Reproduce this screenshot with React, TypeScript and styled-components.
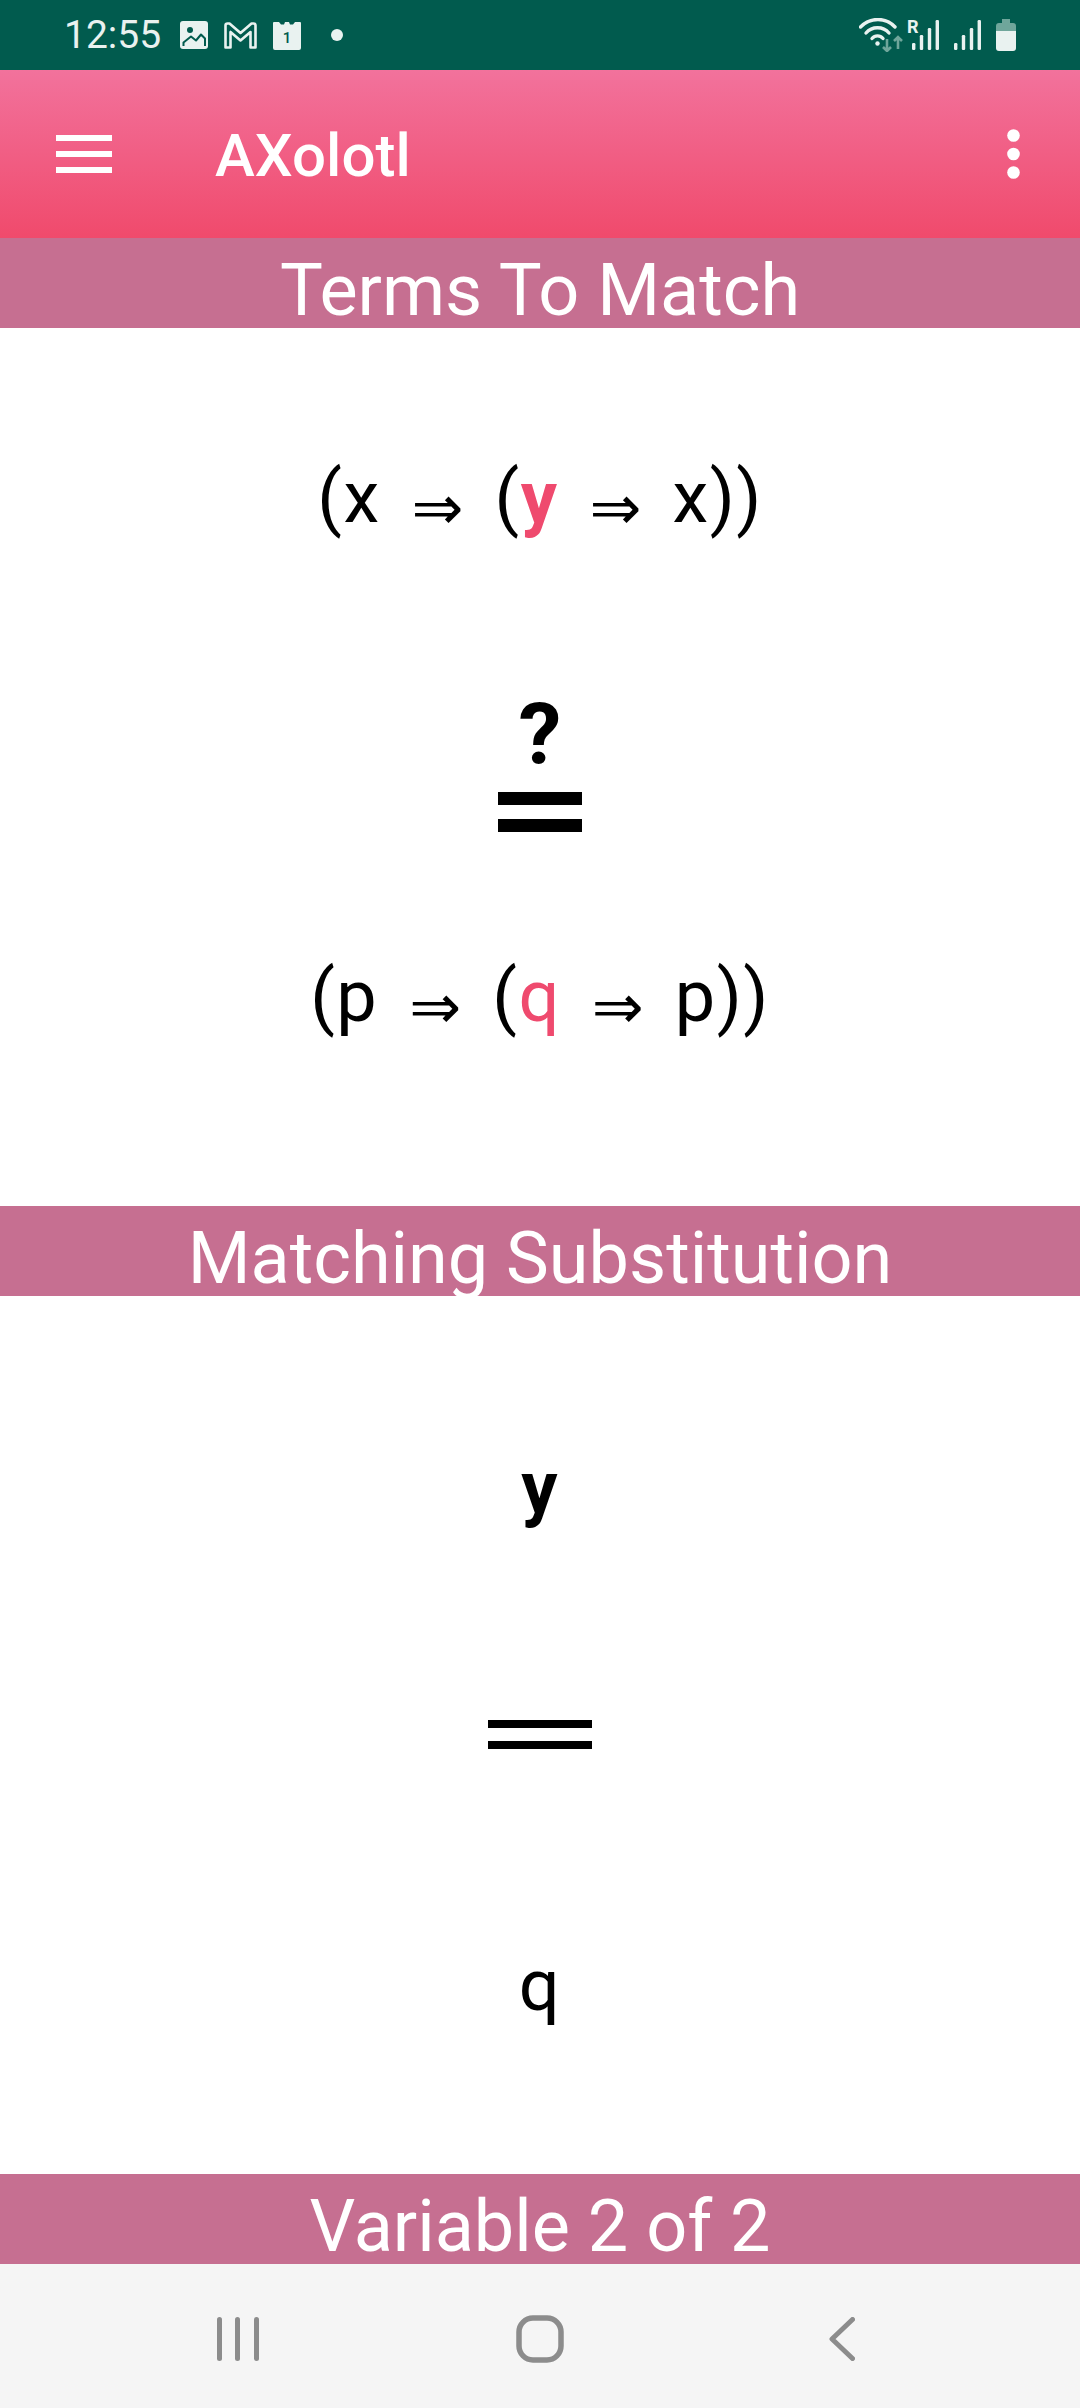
import React from "react";
import styled, { createGlobalStyle } from "styled-components";

const Global = createGlobalStyle`
  html, body { margin: 0; padding: 0; background: #fff; }
  body { font-family: Roboto, "Liberation Sans", sans-serif; }
`;

const Page = styled.div`
  width: 1080px;
  height: 2408px;
  display: flex;
  flex-direction: column;
  overflow: hidden;
  background: #fff;
`;

const StatusBar = styled.div`
  height: 70px;
  flex: none;
  display: flex;
  align-items: center;
  background: #015b4e;
  color: #e9f2f0;
  padding: 0 0 0 64px;
  box-sizing: border-box;
`;

const Clock = styled.span`
  font-size: 39px;
  font-weight: 400;
  line-height: 70px;
  width: 116px;
`;

const StatusIcons = styled.div`
  display: flex;
  align-items: center;
  gap: 16px;
`;

const StatusRight = styled.div`
  margin-left: auto;
  margin-right: 64px;
  display: flex;
  align-items: center;
`;

const Toolbar = styled.header`
  height: 168px;
  flex: none;
  box-sizing: border-box;
  display: flex;
  align-items: center;
  padding: 0 60px 0 56px;
  background: linear-gradient(180deg, #f2729c 0%, #f04a6c 100%);
  color: #fff;
`;

const Title = styled.h1`
  margin: 4px 0 0 103px;
  font-size: 60px;
  font-weight: 500;
  line-height: 164px;
  flex: 1;
`;

const Banner = styled.div`
  height: 90px;
  flex: none;
  background: #c66f91;
  color: #fff;
  font-size: 72px;
  font-weight: 400;
  line-height: 105px;
  text-align: center;
`;

const Section = styled.section`
  height: 878px;
  flex: none;
  display: flex;
  flex-direction: column;
  align-items: center;
  color: #000;
`;

const Formula = styled.div<{ $top: number }>`
  height: 100px;
  margin-top: ${(p) => p.$top}px;
  display: flex;
  align-items: center;
  justify-content: center;
  font-size: 72px;
  letter-spacing: 1.5px;
  line-height: 100px;
  white-space: pre;
`;

const Arrow = styled.span<{ $gap: number }>`
  font-family: "Liberation Serif", "DejaVu Sans", serif;
  font-size: 62px;
  letter-spacing: 0;
  margin: 20px ${(p) => p.$gap}px 0;
`;

const Var = styled.span<{ $bold?: boolean; $accent?: boolean }>`
  font-weight: ${(p) => (p.$bold ? 700 : 400)};
  color: ${(p) => (p.$accent ? "#ef4a6e" : "inherit")};
`;

const Question = styled.div`
  margin-top: 142px;
  height: 90px;
  font-size: 86px;
  font-weight: 700;
  line-height: 90px;
`;

const Equals = styled.div<{ $w: number; $t: number; $gap: number; $top: number }>`
  width: ${(p) => p.$w}px;
  height: ${(p) => p.$gap}px;
  margin-top: ${(p) => p.$top}px;
  border-top: ${(p) => p.$t}px solid #000;
  border-bottom: ${(p) => p.$t}px solid #000;
`;

const NavBar = styled.nav`
  flex: 1;
  background: #f5f5f5;
  display: flex;
  align-items: center;
  justify-content: center;
  padding-top: 6px;
`;

const NavSlot = styled.div`
  width: 302px;
  display: flex;
  justify-content: center;
`;

const Hamburger = () => (
  <svg width="56" height="38" viewBox="0 0 56 38" fill="#fff">
    <rect y="0" width="56" height="6" />
    <rect y="16" width="56" height="6" />
    <rect y="32" width="56" height="6" />
  </svg>
);

const Dots = () => (
  <svg width="13" height="50" viewBox="0 0 13 50" fill="#fff">
    <circle cx="6.5" cy="6.5" r="6.3" />
    <circle cx="6.5" cy="25" r="6.3" />
    <circle cx="6.5" cy="43.5" r="6.3" />
  </svg>
);

const PhotoIcon = () => (
  <svg width="28" height="28" viewBox="0 0 28 28">
    <rect width="28" height="28" rx="3" fill="#e9f2f0" />
    <circle cx="10" cy="9" r="3" fill="#015b4e" />
    <path d="M3.5 25 V21.5 L11 15.5 L16 19.5 L21 13.5 L25 17.5 V25" fill="none" stroke="#015b4e" strokeWidth="2" strokeLinejoin="round" />
  </svg>
);

const MailIcon = () => (
  <svg width="33" height="27" viewBox="0 0 33 27" fill="none" stroke="#e9f2f0" strokeWidth="2.6">
    <path d="M1.5 25.5 V3.5 Q1.5 1.5 3.5 1.5 H5.5 L16.5 11 L27.5 1.5 H29.5 Q31.5 1.5 31.5 3.5 V25.5 H26.5 V10 L16.5 18.5 L6.5 10 V25.5 Z" strokeLinejoin="round" />
  </svg>
);

const CalendarIcon = () => (
  <svg width="28" height="29" viewBox="0 0 28 29">
    <path d="M1 1 H6 L8 3.5 H11 L12 1 H16 L17 3.5 H20 L22 1 H27 Q28 1 28 2 V27 Q28 29 26 29 H2 Q0 29 0 27 V2 Q0 1 1 1 Z" fill="#e9f2f0" />
    <text x="14" y="21.5" textAnchor="middle" fontSize="15" fontWeight="500" fontFamily="Roboto, sans-serif" fill="#015b4e">1</text>
  </svg>
);

const DotIcon = () => (
  <svg width="12" height="12" viewBox="0 0 12 12" style={{ marginLeft: 14 }}>
    <circle cx="6" cy="6" r="6" fill="#e9f2f0" />
  </svg>
);

const WifiIcon = () => (
  <svg width="44" height="34" viewBox="0 0 44 34" fill="none">
    <path d="M1.5 9 C11 -1 27 -1 36 9" stroke="#e9f2f0" strokeWidth="3.4" strokeLinecap="round" />
    <path d="M7 15 C13 8 24 8 30 15" stroke="#e9f2f0" strokeWidth="3.4" strokeLinecap="round" />
    <path d="M13 20.5 C16 17 21 17 24 20.5" stroke="#e9f2f0" strokeWidth="3.4" strokeLinecap="round" />
    <circle cx="18.5" cy="25.5" r="2.2" fill="#e9f2f0" />
    <path d="M28 21 V33 M24 29 L28 33 L32 29 M39 31 V19 M35 23 L39 19 L43 23" stroke="#6fa69b" strokeWidth="2.6" />
  </svg>
);

const SignalIcon = () => (
  <svg width="27" height="30" viewBox="0 0 27 30" fill="#e9f2f0">
    <rect x="0" y="23" width="3.4" height="7" rx="1.2" />
    <rect x="7.8" y="15" width="3.4" height="15" rx="1.2" />
    <rect x="15.8" y="8" width="3.4" height="22" rx="1.2" />
    <rect x="23.6" y="0" width="3.4" height="30" rx="1.2" />
  </svg>
);

const RoamingLetter = styled.span`
  font-size: 18px;
  font-weight: 700;
  line-height: 14px;
  color: #e9f2f0;
  position: absolute;
  left: -3px;
  top: 0;
`;

const RoamedSignal = styled.div`
  position: relative;
  display: flex;
  margin-left: 7px;
  width: 29px;
  height: 30px;
  justify-content: flex-end;
  margin-right: 15px;
`;

const BatteryIcon = () => (
  <svg width="20" height="32" viewBox="0 0 20 32" style={{ marginLeft: 15 }}>
    <path d="M6 0 H14 V4 H17 Q20 4 20 7 V12 H0 V7 Q0 4 3 4 H6 Z" fill="#6fa69b" />
    <path d="M0 12 H20 V29 Q20 32 17 32 H3 Q0 32 0 29 Z" fill="#e9f2f0" />
  </svg>
);

const Recents = () => (
  <svg width="42" height="44" viewBox="0 0 42 44" fill="#8c8c8c">
    <rect x="0" y="0" width="5" height="44" rx="2.5" />
    <rect x="18" y="0" width="5" height="44" rx="2.5" />
    <rect x="37" y="0" width="5" height="44" rx="2.5" />
  </svg>
);

const Home = () => (
  <svg width="48" height="48" viewBox="0 0 48 48" fill="none" stroke="#8c8c8c" strokeWidth="5.5">
    <rect x="3" y="3" width="42" height="42" rx="14" />
  </svg>
);

const Back = () => (
  <svg width="26" height="44" viewBox="0 0 26 44" fill="none" stroke="#8c8c8c" strokeWidth="5" strokeLinecap="round" strokeLinejoin="round">
    <path d="M23.5 2.5 L3 22 L23.5 41.5" />
  </svg>
);

const Expression = ({ a, b, top, gap }: { a: string; b: string; top: number; gap: number }) => (
  <Formula $top={top}>
    <span>({a}</span>
    <Arrow $gap={gap}>⇒</Arrow>
    <span>(</span>
    {a === "x" ? <Var $bold $accent>{b}</Var> : <Var $accent>{b}</Var>}
    <Arrow $gap={gap}>⇒</Arrow>
    <span>{a}))</span>
  </Formula>
);

export default function App() {
  return (
    <Page>
      <Global />
      <StatusBar>
        <Clock>12:55</Clock>
        <StatusIcons>
          <PhotoIcon />
          <MailIcon />
          <CalendarIcon />
          <DotIcon />
        </StatusIcons>
        <StatusRight>
          <WifiIcon />
          <RoamedSignal>
            <RoamingLetter>R</RoamingLetter>
            <SignalIcon />
          </RoamedSignal>
          <SignalIcon />
          <BatteryIcon />
        </StatusRight>
      </StatusBar>
      <Toolbar>
        <Hamburger />
        <Title>AXolotl</Title>
        <Dots />
      </Toolbar>
      <Banner>Terms To Match</Banner>
      <Section>
        <Expression a="x" b="y" top={120} gap={31} />
        <Question>?</Question>
        <Equals $w={84} $t={13} $gap={14} $top={12} />
        <Expression a="p" b="q" top={115} gap={31} />
      </Section>
      <Banner>Matching Substitution</Banner>
      <Section>
        <Formula $top={142}>
          <Var $bold>y</Var>
        </Formula>
        <Equals $w={104} $t={8} $gap={13} $top={182} />
        <Formula $top={187}>
          <Var>q</Var>
        </Formula>
      </Section>
      <Banner>Variable 2 of 2</Banner>
      <NavBar>
        <NavSlot><Recents /></NavSlot>
        <NavSlot><Home /></NavSlot>
        <NavSlot><Back /></NavSlot>
      </NavBar>
    </Page>
  );
}
